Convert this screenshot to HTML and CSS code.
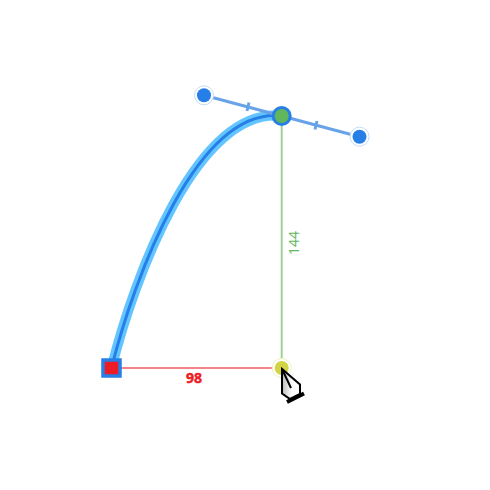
FILE: index.html
```html
<!DOCTYPE html>
<html lang="en">
<head>
<meta charset="utf-8">
<meta name="viewport" content="width=device-width, initial-scale=1">
<title>Curve editor</title>
<link rel="stylesheet" href="styles.css">
</head>
<body>
<main class="canvas">
<svg class="drawing" viewBox="0 0 490 490" role="img" aria-label="Curve with measured offsets">
  <defs>
    <linearGradient id="nib-fill">
      <stop offset="0" stop-color="#bbb"/>
      <stop offset="0.55" stop-color="#fff"/>
    </linearGradient>
  </defs>

  <!-- Selected curve -->
  <path class="curve-glow" d="M111.500 368C134 278 197 106 282 116"/>
  <path class="curve-core" d="M111.500 368C134 278 197 106 282 116"/>

  <!-- Measured offsets -->
  <path class="guide-x" d="M111 368H282"/>
  <path class="guide-y" d="M281.700 116V368"/>
  <text class="measure measure-x" x="194" y="383">98</text>
  <text class="measure measure-y" transform="translate(299 243) rotate(-90)">144</text>

  <!-- Direction handles -->
  <path class="handle-line" d="M204 95.300L359.500 136.700"/>
  <path class="handle-tick" d="M249 102.500L247 111M317 121L315 129.500"/>
  <circle class="halo" cx="204" cy="95.300" r="9.500"/>
  <circle class="handle-dot" cx="204" cy="95.300" r="7"/>
  <circle class="halo" cx="359.500" cy="136.700" r="9.500"/>
  <circle class="handle-dot" cx="359.500" cy="136.700" r="7"/>

  <!-- Anchors -->
  <circle class="anchor-end" cx="281.700" cy="116" r="8.500"/>
  <rect class="anchor-start" x="103" y="360" width="17" height="16"/>
  <circle class="halo halo-yellow" cx="281.700" cy="368" r="9.500"/>
  <circle class="corner-dot" cx="281.700" cy="368" r="7"/>

  <!-- Pen cursor -->
  <path class="nib" d="M282 369V393.500L290 399L300 394V384.500Z"/>
  <path class="nib-slit" d="M282 369L291 388"/>
  <path class="nib-base" d="M287 402L304 393.500"/>
</svg>
</main>
</body>
</html>
```

FILE: styles.css
```css
body {
  margin: 0;
  background: #fff;
}

.drawing {
  display: block;
  width: 100%;
  height: auto;
  fill: none;
}

.curve-glow {
  stroke: #62c5ff;
  stroke-width: 10;
}

.curve-core {
  stroke: #267fe6;
  stroke-width: 3;
}

.guide-x {
  stroke: #f58489;
  stroke-width: 2;
}

.guide-y {
  stroke: #9dd295;
  stroke-width: 2;
}

.handle-line {
  stroke: #68a3e8;
  stroke-width: 3;
}

.handle-tick {
  stroke: #68a3e8;
  stroke-width: 3;
}

.halo {
  fill: #fff;
  stroke: #c5dcf8;
  stroke-width: 1;
}

.halo-yellow {
  stroke: #f0f0bc;
}

.handle-dot {
  fill: #267fe6;
}

.corner-dot {
  fill: #d2d444;
}

.anchor-end {
  fill: #62b65c;
  stroke: #267fe6;
  stroke-width: 3;
}

.anchor-start {
  fill: #ed1c24;
  stroke: #267fe6;
  stroke-width: 3.5;
}

.measure {
  font-family: "Open Sans", sans-serif;
  font-size: 14px;
  text-anchor: middle;
}

.measure-x {
  fill: #ed1c24;
  stroke: #ed1c24;
  stroke-width: 0.5;
  font-weight: 700;
}

.measure-y {
  fill: #62b65c;
}

.nib {
  fill: url(#nib-fill);
  stroke: #000;
  stroke-width: 2;
  stroke-linejoin: miter;
}

.nib-slit {
  stroke: #000;
  stroke-width: 2;
}

.nib-base {
  stroke: #000;
  stroke-width: 4;
}
```
